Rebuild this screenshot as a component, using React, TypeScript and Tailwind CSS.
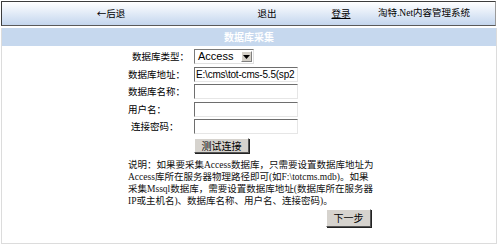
import React from "react";

const cjk = "font-['Noto_Sans_CJK_SC','Noto_Sans',sans-serif]";
const serifCjk = "font-['Liberation_Serif','Noto_Sans_CJK_SC',serif]";

const rows = [
  { label: "数据库类型：", indent: "pl-[4px]", value: "", kind: "select", h: "h-[18px]" },
  { label: "数据库地址：", indent: "pl-0", value: "E:\\cms\\tot-cms-5.5(sp2", kind: "input", h: "h-[17px]" },
  { label: "数据库名称：", indent: "pl-0", value: "", kind: "input", h: "h-[18px]" },
  { label: "用户名：", indent: "pl-0", value: "", kind: "input", h: "h-[17px]" },
  { label: "连接密码：", indent: "pl-[3px]", value: "", kind: "input", h: "h-[18px]" },
];

const notes = [
  "说明：如果要采集Access数据库，只需要设置数据库地址为",
  "Access库所在服务器物理路径即可(如F:\\totcms.mdb)。如果",
  "采集Mssql数据库，需要设置数据库地址(数据库所在服务器",
  "IP或主机名)、数据库名称、用户名、连接密码)。",
];

const Field = ({ kind, value }: any) => {
  if (kind === "select") {
    return (
      <div className="flex h-[15px] w-[60px] items-center border border-t-[#7a7a7a] border-l-[#7a7a7a] border-b-[#e0e0e0] border-r-[#e0e0e0] bg-white">
        <span className="flex-1 pl-[3px] font-['Liberation_Sans',sans-serif] text-[11px] leading-none text-black">
          Access
        </span>
        <span className="mr-px flex h-[11px] w-[11px] items-center justify-center border border-t-white border-l-white border-b-[#808080] border-r-[#808080] bg-[#d4d0c8]">
          <svg width="7" height="4" viewBox="0 0 7 4">
            <path d="M0 0h7L3.5 4z" fill="#000" />
          </svg>
        </span>
      </div>
    );
  }
  return (
    <div className="h-[15px] w-[104px] overflow-hidden whitespace-nowrap border border-t-[#6e6e6e] border-l-[#6e6e6e] border-b-[#e6e6e6] border-r-[#e6e6e6] bg-white pl-[1px] font-['Liberation_Sans',sans-serif] text-[10px] leading-[13px] tracking-[-0.2px] text-black">
      {value}
    </div>
  );
};

const Btn = ({ children, className }: any) => (
  <div
    className={`flex items-center justify-center border border-t-white border-l-white border-b-[#555] border-r-[#555] bg-[#d6d3ce] shadow-[1px_1px_0_#222] text-[10px] leading-none text-black ${className}`}
  >
    {children}
  </div>
);

export default function App() {
  return (
    <div className={`h-[246px] w-[500px] bg-white p-px ${cjk} text-[10px] text-black`}>
      <div className="grid h-[25px] w-[495px] grid-cols-[218px_94px_54px_112px_1fr] items-center border border-t-[#3c3c3c] border-l-[#3c3c3c] border-b-[#5a5a5a] border-r-[#9a9a9a] bg-gradient-to-b from-[#ffffff] to-[#c4d6ee] text-[9.5px]">
        <div className="text-center">←后退</div>
        <div className="text-center">退出</div>
        <div className="text-center underline">登录</div>
        <div className={`text-center ${serifCjk}`}>淘特.Net内容管理系统</div>
        <div />
      </div>

      <div className="mt-[2px] h-[216px] w-[496px] border border-t-0 border-[#dcdcdc]">
        <div className="h-[18px] bg-[#c6d8ee] text-center font-bold leading-[18px] text-white">
          数据库采集
        </div>

        <div className="ml-[126px] w-[245px] pt-[3px]">
          {rows.map((r) => (
            <div key={r.label} className={`flex items-start ${r.h}`}>
              <div className={`w-[66px] ${r.indent} text-[9.5px] leading-[15px]`}>{r.label}</div>
              <Field kind={r.kind} value={r.value} />
            </div>
          ))}

          <div className="flex pl-[66px] pt-[1px]">
            <Btn className="h-[15px] w-[55px]">测试连接</Btn>
          </div>

          <div className={`mt-[6px] ${serifCjk} whitespace-nowrap text-[9.5px] leading-[12px] text-[#111]`}>
            {notes.map((n) => (
              <div key={n}>{n}</div>
            ))}
          </div>

          <div className="mt-[2px] flex justify-end pr-[2px]">
            <Btn className="h-[18px] w-[45px]">下一步</Btn>
          </div>
        </div>
      </div>
    </div>
  );
}
